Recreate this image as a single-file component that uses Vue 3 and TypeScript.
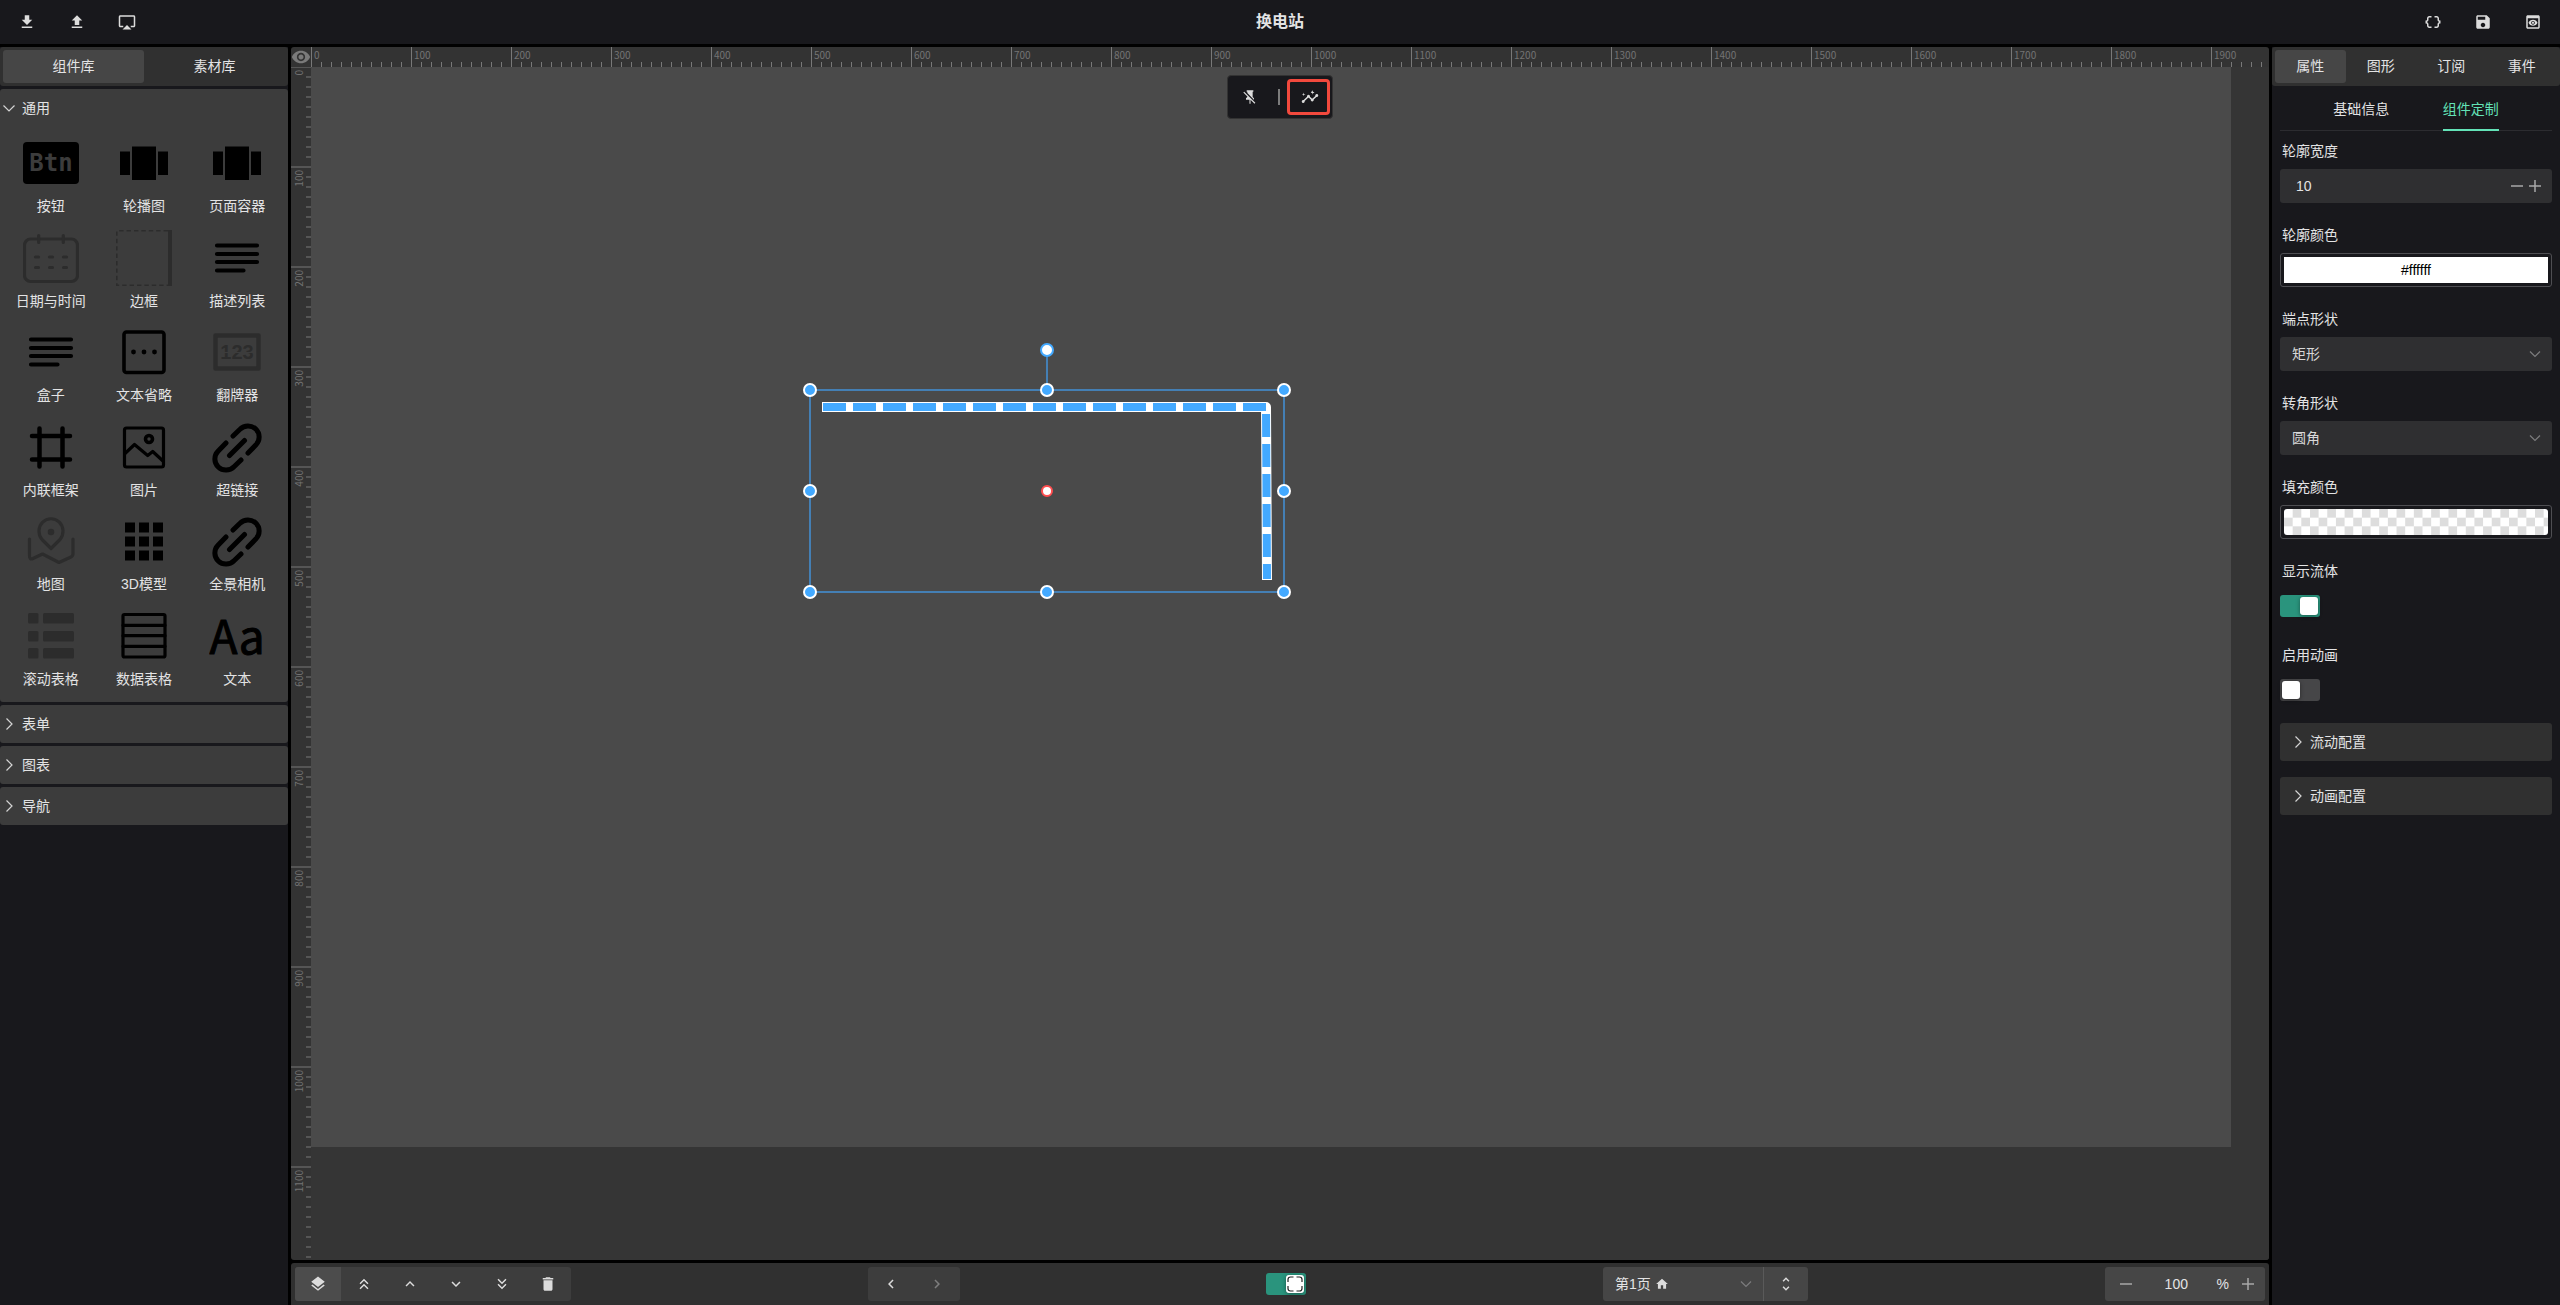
<script setup lang="ts">
import { ref } from 'vue'

interface Widget {
  name: string
  icon: string
  muted?: boolean
}

const widgets: Widget[] = [
  { name: '按钮', icon: 'button' },
  { name: '轮播图', icon: 'carousel' },
  { name: '页面容器', icon: 'carousel' },
  { name: '日期与时间', icon: 'calendar', muted: true },
  { name: '边框', icon: 'border', muted: true },
  { name: '描述列表', icon: 'lines' },
  { name: '盒子', icon: 'lines' },
  { name: '文本省略', icon: 'ellipsis' },
  { name: '翻牌器', icon: 'counter', muted: true },
  { name: '内联框架', icon: 'frame' },
  { name: '图片', icon: 'image' },
  { name: '超链接', icon: 'link' },
  { name: '地图', icon: 'map', muted: true },
  { name: '3D模型', icon: 'grid' },
  { name: '全景相机', icon: 'link' },
  { name: '滚动表格', icon: 'list', muted: true },
  { name: '数据表格', icon: 'table' },
  { name: '文本', icon: 'text' },
]

const folded: string[] = ['表单', '图表', '导航']
const propTabs: string[] = ['属性', '图形', '订阅', '事件']
const configs: string[] = ['流动配置', '动画配置']

const glyphs: Record<string, string> = {
  download: 'M19 9h-4V3H9v6H5l7 7 7-7zM5 18v2h14v-2H5z',
  upload: 'M5 20h14v-2H5v2zm0-10h4v6h6v-6h4l-7-7-7 7z',
  airplay: 'M6 22h12l-6-6zM21 3H3c-1.1 0-2 .9-2 2v12c0 1.1.9 2 2 2h4v-2H3V5h18v12h-4v2h4c1.1 0 2-.9 2-2V5c0-1.1-.9-2-2-2z',
  braces: 'M4 7v2c0 .55-.45 1-1 1H2v4h1c.55 0 1 .45 1 1v2c0 1.65 1.35 3 3 3h3v-2H7c-.55 0-1-.45-1-1v-2c0-1.3-.84-2.42-2-2.83v-.34C5.16 11.42 6 10.3 6 9V7c0-.55.45-1 1-1h3V4H7C5.35 4 4 5.35 4 7zM21 10c-.55 0-1-.45-1-1V7c0-1.65-1.35-3-3-3h-3v2h3c.55 0 1 .45 1 1v2c0 1.3.84 2.42 2 2.83v.34c-1.16.41-2 1.52-2 2.83v2c0 .55-.45 1-1 1h-3v2h3c1.65 0 3-1.35 3-3v-2c0-.55.45-1 1-1h1v-4h-1z',
  save: 'M17 3H5c-1.11 0-2 .9-2 2v14c0 1.1.89 2 2 2h14c1.1 0 2-.9 2-2V7l-4-4zm-5 16c-1.66 0-3-1.34-3-3s1.34-3 3-3 3 1.34 3 3-1.34 3-3 3zm3-10H5V5h10v4z',
  preview: 'M19 3H5c-1.11 0-2 .9-2 2v14c0 1.1.89 2 2 2h14c1.1 0 2-.9 2-2V5c0-1.1-.89-2-2-2zm0 16H5V7h14v12zm-5.5-6c0 .83-.67 1.5-1.5 1.5s-1.5-.67-1.5-1.5.67-1.5 1.5-1.5 1.5.67 1.5 1.5zM12 9c-2.73 0-5.06 1.66-6 4 .94 2.34 3.27 4 6 4s5.06-1.66 6-4c-.94-2.34-3.27-4-6-4zm0 6.5c-1.38 0-2.5-1.12-2.5-2.5s1.12-2.5 2.5-2.5 2.5 1.12 2.5 2.5-1.12 2.5-2.5 2.5z',
  pinOff: 'M2 5.27L3.28 4 20 20.72 18.73 22l-5.93-5.93V22h-1.6v-6H6v-2l2-2v-.73l-6-6M16 12l2 2v2h-.18L8 6.18V4H7V2h10v2h-1v8z',
  insights: 'M21 8c-1.45 0-2.26 1.44-1.93 2.51l-3.55 3.56c-.3-.09-.74-.09-1.04 0l-2.55-2.55C12.27 10.45 11.46 9 10 9c-1.45 0-2.27 1.44-1.93 2.52l-4.56 4.55C2.44 15.74 1 16.55 1 18c0 1.1.9 2 2 2 1.45 0 2.26-1.44 1.93-2.51l4.55-4.56c.3.09.74.09 1.04 0l2.55 2.55C12.73 16.55 13.54 18 15 18c1.45 0 2.27-1.44 1.93-2.52l3.56-3.55c1.07.33 2.51-.48 2.51-1.93 0-1.1-.9-2-2-2zM15 9l.94-2.07L18 6l-2.06-.93L15 3l-.92 2.07L13 6l2.08.93zM3.5 11L4 9l2-.5L4 8l-.5-2L3 8l-2 .5L3 9z',
  layers: 'M11.99 18.54l-7.37-5.73L3 14.07l9 7 9-7-1.63-1.27-7.38 5.74zM12 16l7.36-5.73L21 9l-9-7-9 7 1.63 1.27L12 16z',
  top: 'M6 17.59L7.41 19 12 14.42 16.59 19 18 17.59l-6-6zM6 11l1.41 1.41L12 7.83l4.59 4.58L18 11l-6-6z',
  up: 'M7.41 15.41L12 10.83l4.59 4.58L18 14l-6-6-6 6z',
  down: 'M7.41 8.59L12 13.17l4.59-4.58L18 10l-6 6-6-6z',
  bottom: 'M18 6.41L16.59 5 12 9.58 7.41 5 6 6.41l6 6zM18 13l-1.41-1.41L12 16.17l-4.59-4.58L6 13l6 6z',
  trash: 'M6 19c0 1.1.9 2 2 2h8c1.1 0 2-.9 2-2V7H6v12zM19 4h-3.5l-1-1h-5l-1 1H5v2h14V4z',
  prev: 'M15.41 7.41L14 6l-6 6 6 6 1.41-1.41L10.83 12z',
  next: 'M8.59 16.59L13.17 12 8.59 7.41 10 6l6 6-6 6z',
  unfold: 'M12 5.83L15.17 9l1.41-1.41L12 3 7.41 7.59 8.83 9 12 5.83zm0 12.34L8.83 15l-1.41 1.41L12 21l4.59-4.59L15.17 15 12 18.17z',
  home: 'M10 20v-6h4v6h5v-8h3L12 3 2 12h3v8z',
  eye: 'M12 4.5C7 4.5 2.73 7.61 1 12c1.73 4.39 6 7.5 11 7.5s9.27-3.11 11-7.5c-1.73-4.39-6-7.5-11-7.5zM12 17c-2.76 0-5-2.24-5-5s2.24-5 5-5 5 2.24 5 5-2.24 5-5 5zm0-8c-1.66 0-3 1.34-3 3s1.34 3 3 3 3-1.34 3-3-1.34-3-3-3z',
}

const headLeft: [string, string][] = [['download', '下载'], ['upload', '上传'], ['airplay', '投屏']]
const headRight: [string, string][] = [['braces', '代码'], ['save', '保存'], ['preview', '预览']]
const layerTools: [string, string][] = [
  ['layers', '图层'], ['top', '置顶'], ['up', '上移'], ['down', '下移'], ['bottom', '置底'], ['trash', '删除'],
]

const ticks = (limit: number): number[] => Array.from({ length: limit / 10 + 1 }, (_, i) => i * 10)
const xTicks = ticks(1950)
const yTicks = ticks(1190)

const handles: [number, number][] = [
  [499, 323], [736, 323], [973, 323], [499, 424], [973, 424], [499, 525], [736, 525], [973, 525],
]

const strokeWidth = ref('10')
const cap = ref('矩形')
const join = ref('圆角')
const flow = ref(true)
const animate = ref(false)
const fit = ref(true)
const page = ref('第1页')
const zoom = ref('100')
</script>

<template>
  <div class="app">
    <header class="head">
      <nav class="head-group">
        <button v-for="[g, t] in headLeft" :key="g" class="head-btn" :aria-label="t">
          <svg class="ico" viewBox="0 0 24 24"><path :d="glyphs[g]" /></svg>
        </button>
      </nav>
      <h1 class="title">换电站</h1>
      <nav class="head-group end">
        <button v-for="[g, t] in headRight" :key="g" class="head-btn" :aria-label="t">
          <svg class="ico" viewBox="0 0 24 24"><path :d="glyphs[g]" /></svg>
        </button>
      </nav>
    </header>

    <aside class="side">
      <div class="tabs">
        <button class="tab on">组件库</button>
        <button class="tab">素材库</button>
      </div>
      <section class="section">
        <button class="section-head">
          <svg class="chev" viewBox="0 0 18 18"><path d="M3.5 6.5L9 12l5.500-5.500" /></svg>通用
        </button>
        <div class="widgets">
          <div v-for="w in widgets" :key="w.name" class="widget" :class="{ muted: w.muted }">
            <svg class="pic" viewBox="0 0 56 56">
              <template v-if="w.icon === 'button'">
                <rect x="0" y="7" width="56" height="42" rx="4" />
                <text class="pic-btn" x="28" y="36">Btn</text>
              </template>
              <path v-else-if="w.icon === 'carousel'" d="M4 16.500h10v23.500H4zM16 11.500h24v33.500H16zM42 16.500h10v23.500H42z" />
              <template v-else-if="w.icon === 'calendar'">
                <rect class="ln s3" x="1.500" y="9" width="53" height="42.500" rx="6" />
                <path class="ln s3" d="M15.700 5.500v7M40.300 5.500v7" />
                <path class="ln s3" d="M12.500 27h3M26.500 27h3M40.500 27h3M12.500 37.500h3M26.500 37.500h3M40.500 37.500h3" />
              </template>
              <template v-else-if="w.icon === 'border'">
                <path class="dash" d="M52 .8H.8V55.200H52" />
                <rect x="52" y="0" width="4" height="56" />
              </template>
              <path v-else-if="w.icon === 'lines'" class="ln s4" d="M8 15.500h40M8 24h40M8 32h40M8 40.500h26.500" />
              <template v-else-if="w.icon === 'ellipsis'">
                <rect class="ln s35" x="8" y="8" width="40" height="40.500" rx="2.500" />
                <circle cx="17.500" cy="28" r="2.400" /><circle cx="28" cy="28" r="2.400" /><circle cx="38.500" cy="28" r="2.400" />
              </template>
              <template v-else-if="w.icon === 'counter'">
                <rect class="ln s45" x="6.500" y="11.500" width="43" height="33" />
                <text class="pic-num" x="28" y="35">123</text>
                <path class="split" d="M10 28.500h36" />
              </template>
              <path v-else-if="w.icon === 'frame'" class="ln s45" d="M16.500 9.500v38M39.500 9.500v38M9 17h38M9 40.500h38" />
              <template v-else-if="w.icon === 'image'">
                <rect class="ln s3" x="8.500" y="9" width="39" height="39" rx="2" />
                <circle class="ln s35" cx="33" cy="20" r="3.500" />
                <path class="ln s3" d="M9 34.500L18.500 25.500 31.700 36.500 36.700 32.500 47 42" />
              </template>
              <path v-else-if="w.icon === 'link'" class="ln s5" d="M24 17L31 10.300A11 11 0 0 1 47 25.800L39 34M32 41L25 47.700A11 11 0 0 1 9 32.200L17 24M20.500 36.500L35.500 21.500" />
              <template v-else-if="w.icon === 'map'">
                <path class="ln s3" d="M28 35.500L19 26.500A12 12.500 0 1 1 37 26.500Z" />
                <circle cx="28" cy="19" r="3.300" />
                <path class="ln s3" d="M6.500 26V43Q6.500 47 10 45.500L19.500 41 36 49.500 48 44Q50 43 50 40.500V26" />
              </template>
              <path v-else-if="w.icon === 'grid'" d="M9 9.500h10v10H9zM23 9.500h10v10H23zM37 9.500h10v10H37zM9 23.500h10v10H9zM23 23.500h10v10H23zM37 23.500h10v10H37zM9 37.500h10v10H9zM23 37.500h10v10H23zM37 37.500h10v10H37z" />
              <template v-else-if="w.icon === 'list'">
                <template v-for="y in [5, 23, 40]" :key="y">
                  <rect x="5" :y="y" width="10.500" height="10.500" rx="1.500" />
                  <rect x="20" :y="y" width="31" height="10.500" rx="1.500" />
                </template>
              </template>
              <template v-else-if="w.icon === 'table'">
                <rect class="ln s3" x="7" y="6.500" width="42" height="42.500" rx="1.500" />
                <path class="ln s3" d="M7 17.300h42M7 27.700h42M7 38.300h42" />
              </template>
              <text v-else class="pic-aa" x="28" y="46">Aa</text>
            </svg>
            <span class="widget-name">{{ w.name }}</span>
          </div>
        </div>
      </section>
      <section v-for="f in folded" :key="f" class="section">
        <button class="section-head">
          <svg class="chev" viewBox="0 0 18 18"><path d="M6.500 3.500L12 9l-5.500 5.500" /></svg>{{ f }}
        </button>
      </section>
    </aside>

    <main class="stage">
      <div class="corner">
        <svg class="eye" viewBox="0 0 24 24"><path :d="glyphs.eye" /></svg>
      </div>
      <svg class="ruler-x">
        <g v-for="t in xTicks" :key="t">
          <rect :x="t" :y="t % 100 ? 15 : 0" width="1" :height="t % 100 ? 5 : 20" />
          <text v-if="t % 100 === 0" :x="t + 3" y="12">{{ t }}</text>
        </g>
      </svg>
      <svg class="ruler-y">
        <g v-for="t in yTicks" :key="t">
          <rect :x="t % 100 ? 15 : 0" :y="t - 1" :width="t % 100 ? 5 : 20" height="2" />
          <text v-if="t % 100 === 0" text-anchor="end" :transform="`translate(12 ${t + 3}) rotate(-90)`">{{ t }}</text>
        </g>
      </svg>
      <div class="viewport">
        <svg class="page" width="1920" height="1080" viewBox="0 0 1920 1080">
          <rect class="page-bg" width="1920" height="1080" />
          <path class="pipe" d="M511 340H955L956 513" />
          <path class="flow" d="M512 340H955L956 512" />
          <path class="sel" d="M736 283V323M499 323H973V525H499Z" />
          <circle class="rotate" cx="736" cy="283" r="6" />
          <circle v-for="[x, y] in handles" :key="`${x}-${y}`" class="handle" :cx="x" :cy="y" r="6" />
          <circle class="pivot" cx="736" cy="424" r="5" />
        </svg>
      </div>
      <div class="float-bar">
        <button class="float-btn" aria-label="取消固定">
          <svg class="ico pin" viewBox="0 0 24 24"><path :d="glyphs.pinOff" /></svg>
        </button>
        <i class="float-sep"></i>
        <button class="float-btn marked" aria-label="编辑路径">
          <svg class="ico" viewBox="0 0 24 24"><path :d="glyphs.insights" /></svg>
        </button>
      </div>
    </main>

    <footer class="foot">
      <div class="btn-group">
        <button v-for="([g, t], i) in layerTools" :key="g" class="foot-btn" :class="{ on: i === 0 }" :aria-label="t">
          <svg class="ico" viewBox="0 0 24 24"><path :d="glyphs[g]" /></svg>
        </button>
      </div>
      <div class="btn-group history">
        <button class="foot-btn" aria-label="撤销"><svg class="ico" viewBox="0 0 24 24"><path :d="glyphs.prev" /></svg></button>
        <button class="foot-btn dim" aria-label="重做"><svg class="ico" viewBox="0 0 24 24"><path :d="glyphs.next" /></svg></button>
      </div>
      <label class="switch">
        <input v-model="fit" type="checkbox" aria-label="适应画布" />
        <span class="knob">
          <svg viewBox="0 0 18 18"><path d="M2 7V4.500Q2 2 4.500 2H7.500M10.500 2H13.500Q16 2 16 4.500V7M16 11V13.500Q16 16 13.500 16H10.500M7.500 16H4.500Q2 16 2 13.500V11" /></svg>
        </span>
      </label>
      <div class="page-pick">
        <div class="page-select">
          <select v-model="page" aria-label="页面"><option>第1页</option></select>
          <svg class="home" viewBox="0 0 24 24"><path :d="glyphs.home" /></svg>
          <svg class="arrow" viewBox="0 0 10 10"><path d="M0 2.500L5 7.500l5-5" /></svg>
        </div>
        <button class="foot-btn" aria-label="页面列表"><svg class="ico" viewBox="0 0 24 24"><path :d="glyphs.unfold" /></svg></button>
      </div>
      <div class="zoom">
        <button class="step" aria-label="缩小"><svg viewBox="0 0 12 12"><path d="M0 6h12" /></svg></button>
        <input v-model="zoom" aria-label="缩放" />
        <span>%</span>
        <button class="step" aria-label="放大"><svg viewBox="0 0 12 12"><path d="M0 6h12M6 0v12" /></svg></button>
      </div>
    </footer>

    <aside class="props">
      <div class="tabs">
        <button v-for="(p, i) in propTabs" :key="p" class="tab" :class="{ on: i === 0 }">{{ p }}</button>
      </div>
      <div class="subtabs">
        <button class="subtab">基础信息</button>
        <button class="subtab on">组件定制</button>
      </div>
      <form class="form" @submit.prevent>
        <label class="label" for="stroke">轮廓宽度</label>
        <div class="field">
          <input id="stroke" v-model="strokeWidth" class="num" />
          <button class="step" type="button" aria-label="减少"><svg viewBox="0 0 12 12"><path d="M0 6h12" /></svg></button>
          <button class="step" type="button" aria-label="增加"><svg viewBox="0 0 12 12"><path d="M0 6h12M6 0v12" /></svg></button>
        </div>
        <label class="label" for="color">轮廓颜色</label>
        <button id="color" class="color" type="button"><span class="swatch">#ffffff</span></button>
        <label class="label" for="cap">端点形状</label>
        <div class="field">
          <select id="cap" v-model="cap"><option>矩形</option></select>
          <svg class="arrow" viewBox="0 0 10 10"><path d="M0 2.500L5 7.500l5-5" /></svg>
        </div>
        <label class="label" for="join">转角形状</label>
        <div class="field">
          <select id="join" v-model="join"><option>圆角</option></select>
          <svg class="arrow" viewBox="0 0 10 10"><path d="M0 2.500L5 7.500l5-5" /></svg>
        </div>
        <label class="label" for="fill">填充颜色</label>
        <button id="fill" class="color" type="button">
          <svg class="checker" viewBox="0 0 61 6" preserveAspectRatio="none">
            <defs>
              <pattern id="squares" width="4" height="4" patternUnits="userSpaceOnUse">
                <path d="M2 0h2v2H2zM0 2h2v2H0z" />
              </pattern>
            </defs>
            <rect class="checker-bg" width="61" height="6" />
            <rect width="61" height="6" fill="url(#squares)" />
          </svg>
        </button>
        <label class="label" for="flow">显示流体</label>
        <div class="row"><label class="switch"><input id="flow" v-model="flow" type="checkbox" /><span class="knob"></span></label></div>
        <label class="label" for="anim">启用动画</label>
        <div class="row"><label class="switch"><input id="anim" v-model="animate" type="checkbox" /><span class="knob"></span></label></div>
      </form>
      <button v-for="c in configs" :key="c" class="config">
        <svg class="chev" viewBox="0 0 18 18"><path d="M6.500 3.500L12 9l-5.500 5.500" /></svg>{{ c }}
      </button>
    </aside>
  </div>
</template>

<style>
body {
  margin: 0;
  background: #000;
}
</style>

<style scoped>
.app {
  display: grid;
  grid-template: 44px minmax(0, 1fr) 42px / 288px minmax(0, 1fr) 288px;
  grid-template-areas: 'head head head' 'side stage props' 'side foot props';
  gap: 3px;
  height: 100vh;
  background: #000;
  color: #e3e3e4;
  font: 14px/22px 'Liberation Sans', 'Noto Sans CJK SC', sans-serif;
}
.app * { box-sizing: border-box; }
button, input, select {
  margin: 0;
  padding: 0;
  border: 0;
  background: none;
  color: inherit;
  font: inherit;
  appearance: none;
  outline: 0;
}
.ico { display: block; width: 18px; height: 18px; fill: #dcdcdc; }

.head {
  grid-area: head;
  display: flex;
  align-items: center;
  justify-content: space-between;
  padding: 0 2px;
  background: #18181c;
}
.head-group { display: flex; flex: 1; }
.head-group.end { justify-content: flex-end; }
.head-btn { display: grid; place-items: center; width: 50px; height: 44px; }
.title { margin: 0; font-size: 16px; line-height: 24px; font-weight: 700; }

.side { grid-area: side; display: flex; flex-direction: column; gap: 3px; background: #18181c; }
.tabs { display: flex; padding: 3px; background: #303030; border-radius: 3px; }
.tab { flex: 1; height: 33px; padding-bottom: 2px; border-radius: 3px; }
.tab.on { background: #464646; }
.section { background: #3c3c3c; border-radius: 3px; }
.section-head { display: flex; align-items: center; gap: 4px; width: 100%; height: 38px; }
.chev { width: 18px; height: 18px; fill: none; stroke: #d4d4d4; stroke-width: 1.2; }
.widgets {
  display: grid;
  grid-template-columns: repeat(3, 1fr);
  grid-auto-rows: 1fr;
  height: 575px;
  padding: 0 4px 8px;
}
.widget { display: flex; flex-direction: column; align-items: center; gap: 4px; padding-top: 8px; }
.pic { width: 56px; height: 56px; fill: #000; stroke: none; color: #000; }
.muted .pic { fill: #2c2c2c; color: #2c2c2c; }
.ln { fill: none; stroke: currentColor; stroke-linecap: round; stroke-linejoin: round; }
.s3 { stroke-width: 3.2; }
.s35 { stroke-width: 3.6; }
.s4 { stroke-width: 4.2; }
.s45 { stroke-width: 4.5; }
.s5 { stroke-width: 5; }
.dash { fill: none; stroke: currentColor; stroke-width: 1.6; stroke-dasharray: 4.4 3; }
.split { stroke: #3c3c3c; stroke-width: 1; }
.pic text { text-anchor: middle; }
.pic-btn { fill: #3c3c3c; font: 700 24px 'DejaVu Sans Mono', monospace; }
.pic-num { font: 700 20px 'Liberation Sans', sans-serif; }
.pic-aa { font: 46px 'Noto Sans CJK SC', sans-serif; stroke: #000; stroke-width: 1; stroke-linejoin: round; }

.stage {
  grid-area: stage;
  position: relative;
  display: grid;
  grid-template: 20px minmax(0, 1fr) / 20px minmax(0, 1fr);
  overflow: hidden;
  border-radius: 3px;
  background: #333;
}
.corner { display: grid; place-items: center; }
.eye { width: 20px; height: 20px; fill: #7a7a7a; }
.ruler-x, .ruler-y { display: block; width: 100%; height: 100%; font: 10px 'Noto Sans CJK SC', sans-serif; }
.ruler-x rect { fill: #787878; }
.ruler-x text { fill: #737373; }
.ruler-y rect { fill: #555; }
.ruler-y text { fill: #737373; }
.viewport { overflow: hidden; background: #353535; }
.page { display: block; }
.page-bg { fill: #4a4a4a; }
.pipe { fill: none; stroke: #fff; stroke-width: 10; stroke-linejoin: round; }
.flow { fill: none; stroke: #43a9ff; stroke-width: 8; stroke-dasharray: 23 7; stroke-linejoin: round; }
.sel { fill: none; stroke: #447fb4; stroke-width: 2; }
.handle { fill: #43a9ff; stroke: #fff; stroke-width: 2; }
.rotate { fill: #fff; stroke: #43a9ff; stroke-width: 2; }
.pivot { fill: #fff; stroke: #ff4d4f; stroke-width: 2; }
.float-bar {
  position: absolute;
  top: 28px;
  left: 50%;
  display: flex;
  align-items: center;
  justify-content: space-between;
  width: 106px;
  height: 44px;
  margin-left: -53px;
  padding-right: 2px;
  border: 1px solid #333;
  border-radius: 4px;
  background: #18181c;
}
.float-btn { display: grid; place-items: center; width: 43px; height: 36px; }
.pin { width: 16px; height: 16px; }
.marked { padding-left: 2px; border: 3px solid #f2493d; border-radius: 4px; }
.float-sep { width: 2px; height: 16px; background: #7c7c7c; }

.foot {
  grid-area: foot;
  display: flex;
  align-items: center;
  justify-content: space-between;
  padding: 0 4px;
  border-radius: 3px 3px 0 0;
  background: #303030;
}
.btn-group { display: flex; overflow: hidden; border-radius: 3px; background: #3d3d3d; }
.history { margin-right: 9px; }
.foot-btn { display: grid; place-items: center; width: 46px; height: 34px; }
.foot-btn.on { background: #4c4c4c; }
.dim .ico { fill: #7e7e7e; }
.page-pick { display: flex; border-radius: 3px; background: #464646; }
.page-pick .foot-btn { width: 45px; border-left: 1px solid #5a5a5a; }
.page-select { position: relative; display: flex; align-items: center; width: 160px; height: 34px; }
.page-select select { width: 100%; height: 34px; padding: 0 12px; }
.home { position: absolute; left: 52px; width: 14px; height: 14px; fill: #dcdcdc; pointer-events: none; }
.arrow { position: absolute; right: 12px; width: 10px; height: 10px; fill: none; stroke: #7c7c7e; stroke-width: 1.2; overflow: visible; pointer-events: none; }
.zoom { display: flex; align-items: center; height: 34px; width: 160px; padding: 0 11px 0 15px; border-radius: 3px; background: #464646; }
.zoom input { flex: 1; min-width: 0; padding-left: 4px; text-align: center; }
.zoom span { padding-right: 13px; }
.step { display: grid; place-items: center; width: 12px; height: 22px; }
.step svg { width: 12px; height: 12px; stroke: #a8a8a8; stroke-width: 1.5; }

.switch { position: relative; display: block; width: 40px; height: 22px; }
.switch input { display: block; width: 40px; height: 22px; border-radius: 3px; background: #464648; }
.switch input:checked { background: #2a947d; }
.knob {
  position: absolute;
  top: 2px;
  left: 2px;
  width: 18px;
  height: 18px;
  border-radius: 3px;
  background: #fff;
  box-shadow: 0 1px 4px rgba(0, 0, 0, .4);
}
.switch input:checked + .knob { left: 20px; }
.knob svg { display: block; width: 18px; height: 18px; fill: none; stroke: #222; stroke-width: 1.2; }

.props { grid-area: props; display: flex; flex-direction: column; background: #18181c; }
.subtabs { display: flex; justify-content: space-evenly; height: 45px; margin: 0 8px; border-bottom: 1px solid #2c2c30; }
.subtab { height: 45px; padding-top: 2px; border-bottom: 2px solid transparent; }
.subtab.on { color: #63e2b7; border-color: #63e2b7; }
.form { display: flex; flex-direction: column; padding: 0 8px; margin-top: 12px; }
.label { height: 26px; padding-left: 2px; line-height: 16px; }
.field, .color, .row { display: flex; align-items: center; height: 34px; margin-bottom: 24px; }
.row:last-child { margin-bottom: 16px; }
.field { position: relative; gap: 6px; padding-right: 11px; border-radius: 3px; background: #2f2f31; }
.num { flex: 1; min-width: 0; padding-left: 16px; }
.field select { width: 100%; height: 34px; padding-left: 12px; color: #d8d8d8; }
.color { padding: 3px; border: 1px solid #4e4e52; border-radius: 3px; }
.swatch { flex: 1; background: #fff; color: #000; line-height: 26px; text-align: center; }
.checker { width: 100%; height: 26px; border-radius: 3px; fill: #ddd; }
.checker-bg { fill: #fff; }
.config { display: flex; align-items: center; gap: 3px; height: 38px; margin: 0 8px 16px; padding-left: 9px; border-radius: 3px; background: #303030; }
</style>
